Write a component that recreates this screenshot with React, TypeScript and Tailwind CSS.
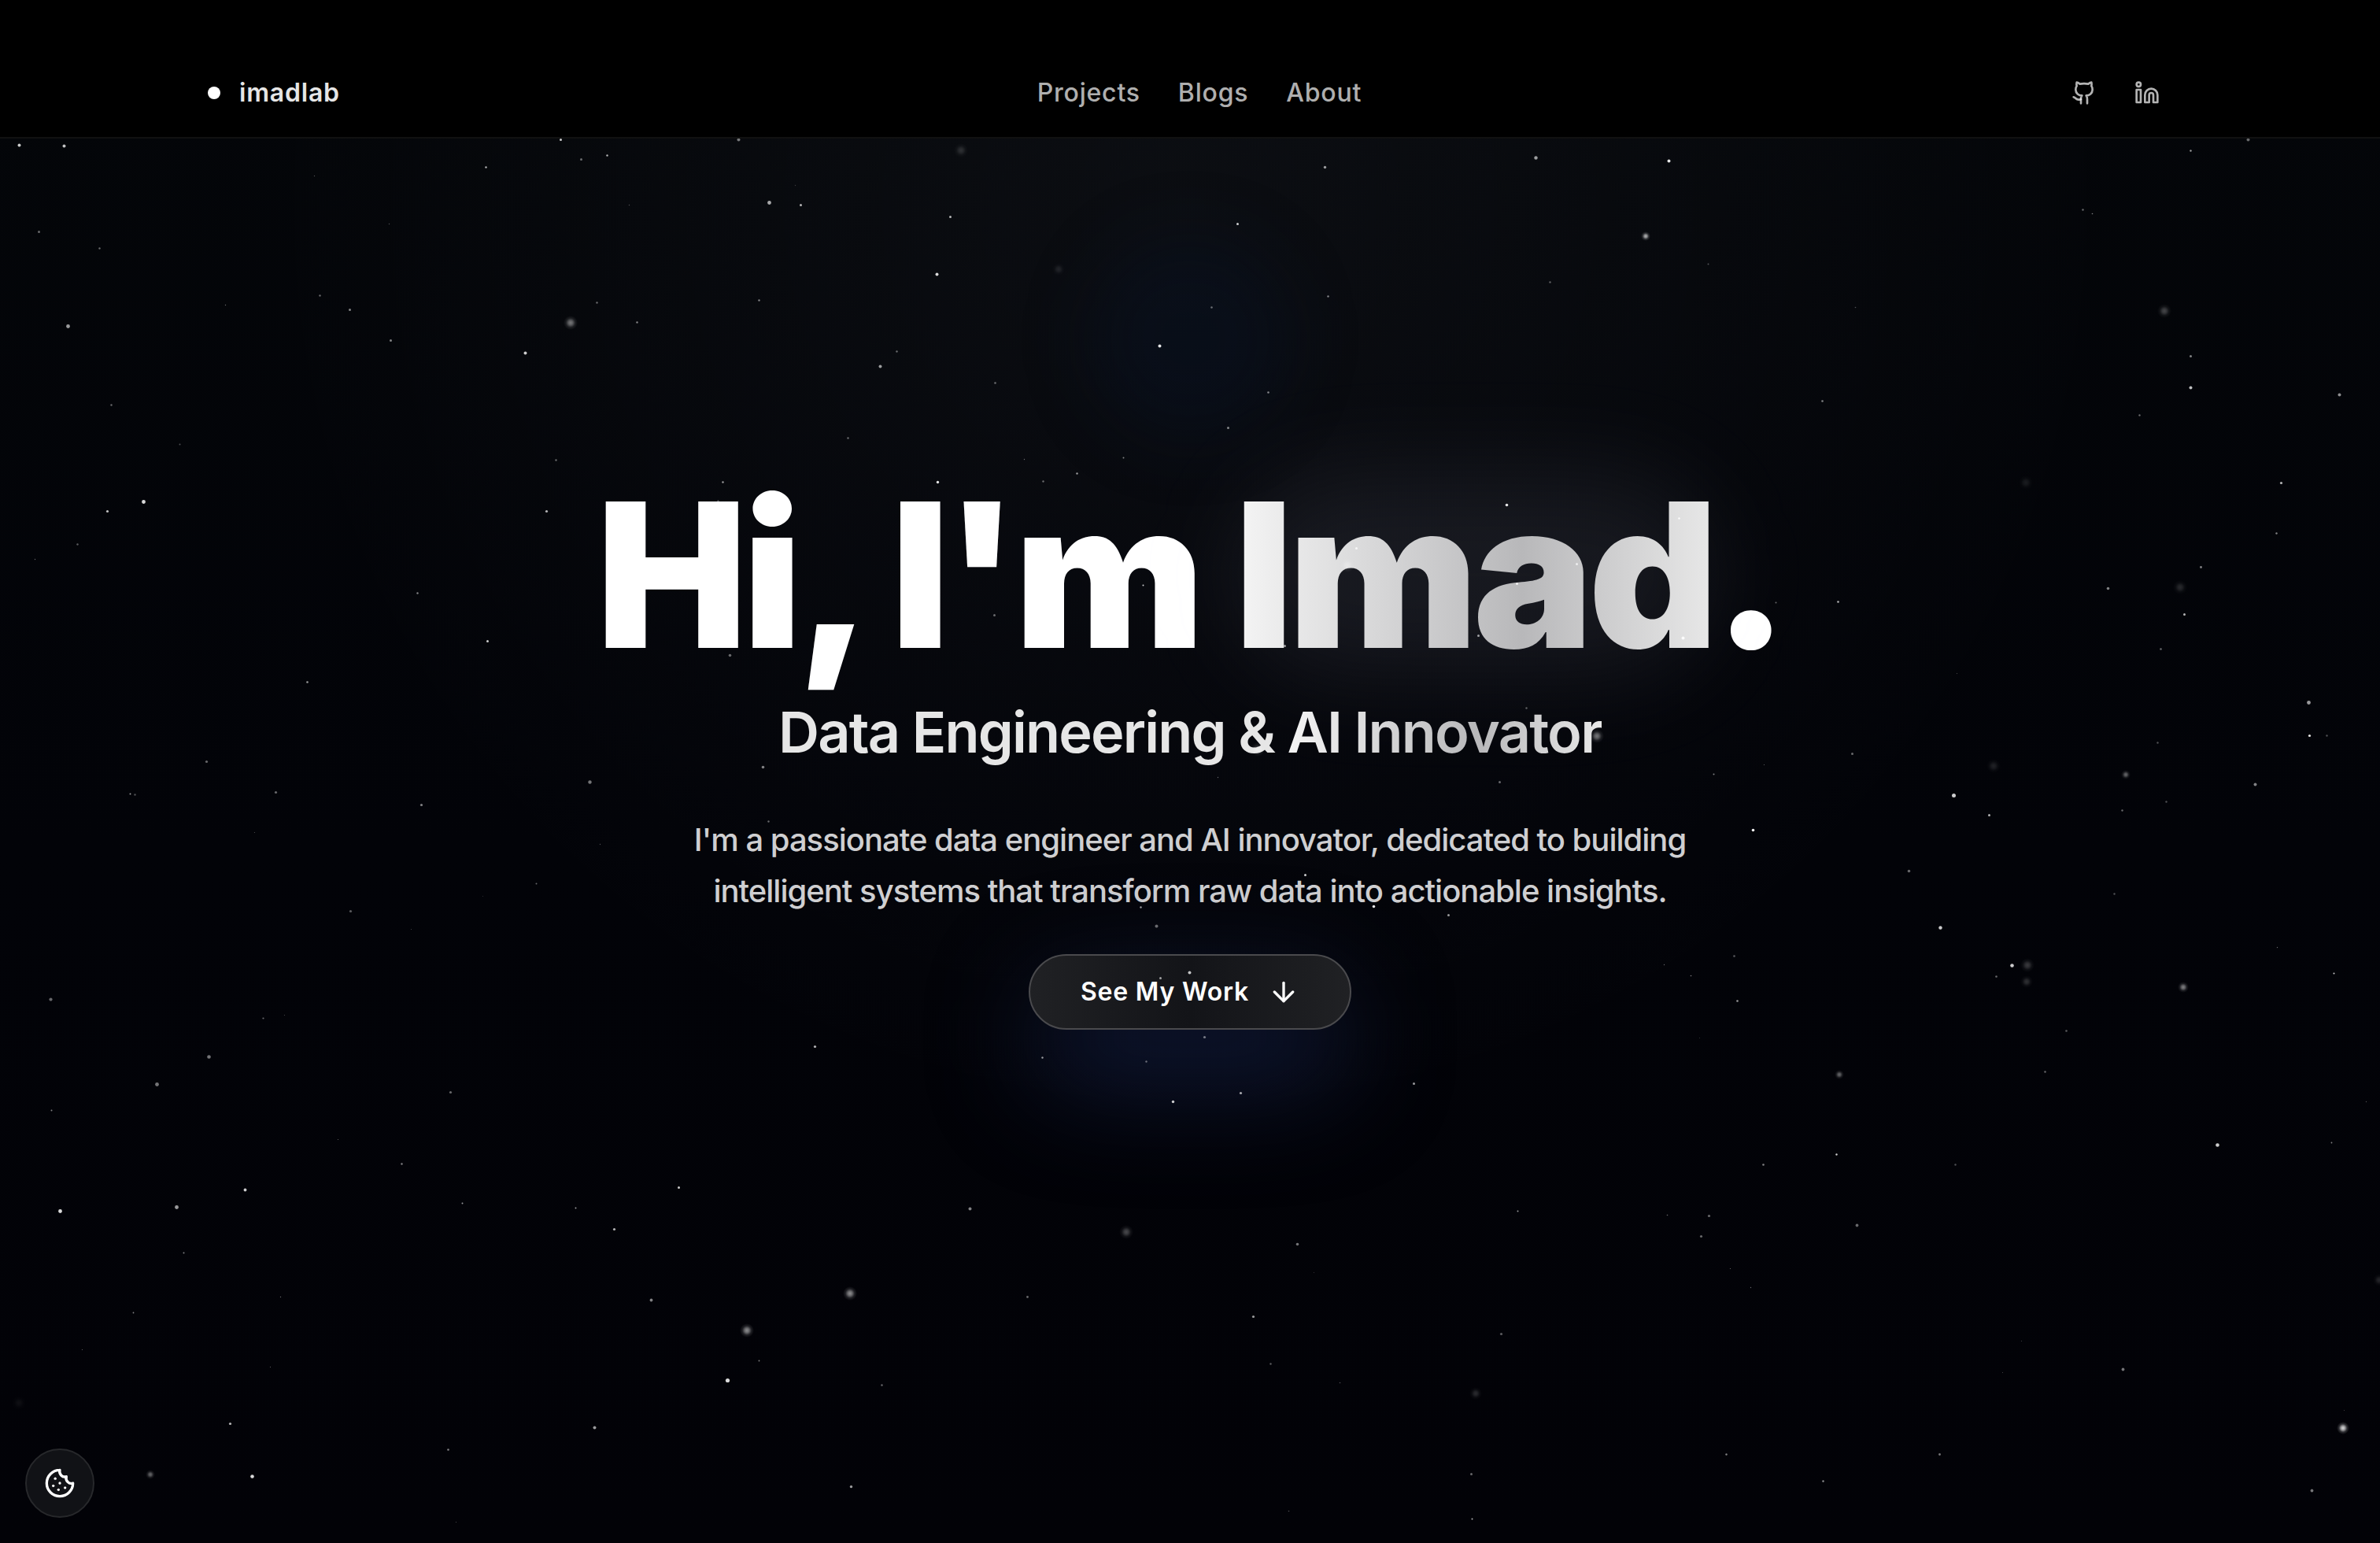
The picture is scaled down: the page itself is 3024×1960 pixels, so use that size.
import { ArrowDown, Cookie, Github, Linkedin } from "lucide-react";

// x, y, radius, opacity
type Star = [number, number, number, number];

const stars: Star[] = [
  [24, 184, 2, 0.8], [81, 185, 2, 0.75], [712, 177, 1.5, 0.8], [938, 177, 2, 0.45], [738, 202, 1.5, 0.4],
  [771, 197, 1.2, 0.7], [617, 212, 1.2, 0.7], [399, 223, 0.7, 0.3], [977, 257, 2.4, 0.65], [799, 260, 0.7, 0.3],
  [49, 294, 1.5, 0.4], [126, 315, 1.2, 0.4], [494, 284, 0.7, 0.3], [286, 387, 0.7, 0.4], [406, 375, 1.2, 0.4],
  [444, 393, 1.5, 0.5], [86, 414, 2.4, 0.6], [496, 432, 1.5, 0.5], [758, 384, 1.2, 0.4], [809, 409, 1.2, 0.5],
  [964, 381, 1.2, 0.5], [667, 448, 2, 0.8], [141, 514, 1.2, 0.4], [228, 564, 1, 0.3], [706, 584, 1.2, 0.4],
  [918, 612, 1.2, 0.6], [182, 637, 2.4, 0.85], [136, 649, 1.6, 0.75], [694, 649, 1.6, 0.7], [912, 636, 1.2, 0.3],
  [98, 691, 1.2, 0.35], [44, 710, 0.7, 0.4], [530, 753, 1.2, 0.5], [1017, 260, 1.5, 0.7], [1010, 235, 0.7, 0.2],
  [1207, 275, 1.5, 0.7], [1190, 348, 2, 0.85], [1118, 465, 2, 0.6], [1139, 446, 1.2, 0.4], [1264, 486, 1.3, 0.4],
  [1473, 439, 2, 0.9], [1539, 390, 1.3, 0.4], [1572, 284, 1.5, 0.8], [1683, 212, 1.7, 0.6], [1687, 376, 1.2, 0.5],
  [1611, 498, 1.3, 0.5], [1560, 543, 1.5, 0.5], [1951, 200, 2.2, 0.6], [1969, 358, 1.2, 0.35], [2120, 204, 2, 0.9],
  [1077, 556, 1.2, 0.4], [1191, 612, 1.7, 0.9], [1368, 601, 1.2, 0.6], [1325, 611, 1.2, 0.4], [1301, 583, 0.7, 0.4],
  [1427, 581, 1, 0.5], [1452, 743, 1, 0.8], [1263, 781, 1.5, 0.4], [927, 832, 1.8, 0.4], [969, 974, 1.8, 0.5],
  [749, 993, 2.2, 0.45], [1914, 641, 1.8, 0.9], [2133, 658, 1.2, 0.9], [1723, 696, 1.5, 0.8], [2003, 716, 1.5, 0.7],
  [1927, 741, 1.5, 0.8], [1878, 807, 1.5, 0.6], [2138, 810, 2, 0.9], [1632, 820, 1.5, 0.6], [2256, 765, 1, 0.4],
  [1939, 899, 1.2, 0.35], [2177, 983, 1, 0.5], [1905, 993, 1.5, 0.4], [2241, 971, 0.6, 0.4], [1547, 987, 0.7, 0.4],
  [976, 1043, 1.2, 0.4], [1658, 1111, 1.5, 0.8], [1449, 1152, 1.2, 0.6], [1745, 1151, 1.8, 0.9], [1840, 1162, 1.5, 0.6],
  [1469, 1176, 2, 0.4], [1511, 1235, 2, 0.75], [1474, 1242, 1.5, 0.6], [1530, 1317, 1.6, 0.45], [1324, 1343, 1.2, 0.6],
  [1456, 1348, 1.2, 0.4], [1490, 1399, 1.7, 0.8], [1576, 1388, 1.6, 0.65], [2856, 177, 2, 0.4], [2783, 191, 1.2, 0.6],
  [2170, 335, 1, 0.3], [2646, 266, 1.2, 0.4], [2658, 271, 0.8, 0.5], [2357, 390, 0.8, 0.3], [2783, 452, 1.5, 0.5],
  [2783, 492, 2, 0.75], [2972, 501, 2, 0.55], [2315, 509, 1.3, 0.5], [2718, 527, 1.2, 0.4], [2898, 613, 1.6, 0.7],
  [2892, 677, 1.2, 0.5], [2796, 720, 1.4, 0.5], [2678, 747, 1.8, 0.5], [2335, 764, 1.3, 0.7], [2775, 780, 1.5, 0.7],
  [2745, 824, 1.3, 0.4], [2486, 855, 0.6, 0.3], [2933, 892, 2.4, 0.6], [2934, 934, 1.6, 0.9], [2956, 934, 1.2, 0.3],
  [2741, 943, 1.2, 0.3], [2353, 957, 1.5, 0.4], [2865, 996, 2, 0.5], [2482, 1010, 2.5, 0.8], [2527, 1035, 1.5, 0.7],
  [2752, 1018, 1.2, 0.3], [2696, 1029, 1.2, 0.4], [2227, 1054, 1.8, 0.95], [2425, 1106, 1.8, 0.4], [2686, 1135, 1.2, 0.3],
  [2465, 1178, 2.2, 0.8], [2203, 1214, 1.3, 0.35], [2114, 1225, 0.7, 0.4], [2148, 1239, 0.8, 0.5], [2556, 1226, 2.3, 0.8],
  [2536, 1240, 1.3, 0.4], [2893, 1203, 0.7, 0.4], [2965, 1236, 1, 0.8], [2207, 1271, 1.3, 0.6], [2159, 1318, 0.6, 0.2],
  [2625, 1309, 1.3, 0.35], [2598, 1361, 1.2, 0.4], [3006, 1399, 0.7, 0.3], [2817, 1454, 2.3, 0.8], [2962, 1451, 0.9, 0.5],
  [2333, 1466, 1.2, 0.8], [2240, 1479, 1.3, 0.5], [2484, 1479, 1.2, 0.3], [1928, 1538, 1, 0.6], [2118, 1543, 0.8, 0.4],
  [2171, 1544, 1.6, 0.4], [2161, 1570, 1.6, 0.4], [2359, 1556, 1.9, 0.4], [2198, 1611, 0.6, 0.4], [2224, 1635, 0.7, 0.4],
  [1907, 1694, 1.6, 0.35], [2697, 1739, 1.9, 0.45], [2568, 1703, 0.5, 0.3], [2544, 1743, 0.5, 0.3], [2978, 1791, 0.5, 0.3],
  [2193, 1847, 1.2, 0.5], [2464, 1847, 1.4, 0.45], [2316, 1881, 1.2, 0.55], [1869, 1872, 1.5, 0.4], [2937, 1893, 1.9, 0.45],
  [1870, 1929, 1, 0.7], [619, 814, 1.5, 0.8], [390, 866, 1.3, 0.6], [262, 967, 1.6, 0.4], [165, 1008, 1, 0.6],
  [171, 1009, 1.2, 0.3], [350, 1006, 1.6, 0.4], [535, 1022, 1.6, 0.5], [323, 1057, 0.6, 0.3], [762, 1072, 0.7, 0.3],
  [681, 1122, 1, 0.4], [613, 1138, 0.5, 0.2], [445, 1157, 1.6, 0.35], [522, 1180, 0.5, 0.3], [64, 1269, 2.1, 0.4],
  [334, 1293, 1.1, 0.4], [361, 1289, 0.6, 0.3], [265, 1342, 2.3, 0.45], [199, 1377, 2.4, 0.45], [572, 1387, 1.6, 0.4],
  [1035, 1329, 1.6, 0.7], [65, 1410, 1, 0.5], [429, 1447, 0.6, 0.4], [510, 1478, 1.2, 0.5], [311, 1511, 1.9, 0.8],
  [862, 1508, 1.5, 0.8], [76, 1538, 2.4, 0.85], [224, 1533, 2.4, 0.6], [587, 1528, 1, 0.6], [731, 1534, 1, 0.6],
  [780, 1561, 1.6, 0.7], [233, 1591, 1, 0.5], [356, 1647, 0.7, 0.4], [827, 1651, 1.9, 0.5], [169, 1667, 0.9, 0.5],
  [104, 1714, 0.6, 0.4], [343, 1736, 0.6, 0.4], [964, 1728, 0.9, 0.5], [924, 1753, 2.6, 0.85], [1120, 1759, 1.2, 0.4],
  [292, 1808, 1.6, 0.7], [755, 1813, 2, 0.6], [569, 1841, 1.3, 0.5], [320, 1875, 2.3, 0.85], [1081, 1888, 1.7, 0.6],
  [579, 1933, 0.6, 0.3], [1796, 1376, 1.5, 0.6], [1232, 1535, 2, 0.5], [1305, 1647, 1.4, 0.4], [1648, 1580, 1.8, 0.45],
  [1592, 1672, 1.6, 0.6], [1614, 1732, 1.2, 0.35], [1702, 1756, 0.8, 0.3], [1637, 1919, 0.8, 0.3], [1669, 1616, 0.6, 0.2],
];

// Out-of-focus stars, drawn through a radial fade
const softStars: Star[] = [
  [725, 410, 9, 0.45], [1221, 191, 9, 0.15], [1345, 342, 8, 0.1], [2091, 300, 6, 0.7], [2750, 395, 9, 0.26],
  [2574, 613, 9, 0.09], [2770, 746, 9, 0.15], [2029, 935, 9, 0.45], [1712, 718, 9, 0.3], [1598, 952, 9, 0.3],
  [2533, 973, 9, 0.12], [2701, 984, 6, 0.4], [2576, 1226, 9, 0.22], [2575, 1247, 8, 0.18], [2774, 1254, 7, 0.5],
  [2337, 1365, 6, 0.4], [1875, 1770, 8, 0.16], [2977, 1814, 8, 0.85], [3023, 1626, 8, 0.14], [1080, 1643, 9, 0.55],
  [949, 1690, 9, 0.55], [24, 1782, 9, 0.05], [191, 1873, 6, 0.4], [1431, 1565, 9, 0.28],
];

function StarField() {
  return (
    <svg
      aria-hidden="true"
      className="pointer-events-none absolute inset-0 z-10 h-full w-full"
      viewBox="0 0 3024 1960"
      preserveAspectRatio="xMidYMid slice"
    >
      <defs>
        <radialGradient id="star-fade">
          <stop offset="0" stopColor="#fff" />
          <stop offset="0.3" stopColor="#fff" stopOpacity="0.75" />
          <stop offset="0.65" stopColor="#fff" stopOpacity="0.2" />
          <stop offset="1" stopColor="#fff" stopOpacity="0" />
        </radialGradient>
      </defs>
      {stars.map(([x, y, r, o]) => (
        <circle key={`${x}-${y}`} cx={x + 0.5} cy={y + 0.5} r={r} fill="#fff" fillOpacity={o} />
      ))}
      {softStars.map(([x, y, r, o]) => (
        <circle key={`${x}-${y}`} cx={x} cy={y} r={r} fill="url(#star-fade)" opacity={o} />
      ))}
    </svg>
  );
}

const links = ["Projects", "Blogs", "About"];

function Header() {
  return (
    <header className="relative z-20 border-b-2 border-[#111111] bg-black pt-[62px]">
      <div className="mx-auto flex h-28 max-w-[2560px] items-center justify-between px-8">
        <a href="#home" className="flex items-center gap-6 text-[32px] leading-[50px] font-semibold tracking-wide text-white/90">
          <span className="size-4 rounded-full bg-white" />
          imadlab
        </a>
        <nav className="flex gap-12">
          {links.map((label) => (
            <a key={label} href={`#${label.toLowerCase()}`} className="text-[32px] leading-[50px] font-medium tracking-wide text-white/70">
              {label}
            </a>
          ))}
        </nav>
        <div className="flex gap-4">
          <a href="#github" aria-label="GitHub" className="p-4 text-white/70">
            <Github size={32} />
          </a>
          <a href="#linkedin" aria-label="LinkedIn" className="p-4 text-white/70">
            <Linkedin size={32} />
          </a>
        </div>
      </div>
    </header>
  );
}

const silver = "bg-[linear-gradient(90deg,#f5f5f5_0%,#b8b8ba_60%,#e8e8e8_100%)] bg-clip-text text-transparent";

function Hero() {
  return (
    <main className="relative flex flex-1 flex-col items-center justify-center pb-[226px] text-center">
      <h1 className="text-[256px] leading-[256px] font-black tracking-tight whitespace-nowrap text-white">
        Hi, I'm{" "}
        <span className="relative inline-block">
          <span className="absolute inset-0 rounded-full bg-[#dcdcff]/8 blur-[64px]" />
          <span className={`relative ${silver}`}>Imad</span>
        </span>
        .
      </h1>
      <p className="relative mt-8 text-[72px] leading-[80px] font-semibold tracking-tight text-[#e6e6e6]">
        Data Engineering &amp; <span className={silver}>AI Innovator</span>
      </p>
      <p className="relative mt-16 max-w-[1344px] text-[40px] leading-[65px] font-medium tracking-tight text-[#cfcfd1]">
        I'm a passionate data engineer and AI innovator, dedicated to building intelligent systems that transform raw
        data into actionable insights.
      </p>
      <div className="relative mt-12">
        <div className="absolute inset-x-0 -bottom-20 h-36 rounded-full bg-[#142046]/60 blur-[64px]" />
        <button className="relative flex h-24 items-center gap-6 rounded-full border-2 border-[#4a4a4d] bg-[linear-gradient(90deg,#202124,#131418,#202124)] px-16 text-[32px] leading-[50px] font-semibold tracking-wide text-white">
          See My Work
          <ArrowDown size={40} />
        </button>
      </div>
    </main>
  );
}

export default function App() {
  return (
    <div className="relative flex min-h-screen flex-col overflow-hidden bg-[linear-gradient(180deg,#040609_0%,#020308_55%,#020207_100%)] font-['Inter',sans-serif]">
      <div className="absolute inset-0 bg-[radial-gradient(1200px_1200px_at_50%_260px,rgba(210,220,255,0.04),transparent)]" />
      <div className="absolute top-[300px] left-1/2 size-[260px] -translate-x-1/2 rounded-full bg-[#08142c]/30 blur-[40px]" />
      <Header />
      <Hero />
      <StarField />
      <button
        aria-label="Cookie preferences"
        className="absolute bottom-8 left-8 z-20 flex size-[88px] items-center justify-center rounded-full border-2 border-[#27282b] bg-[#111216] text-white"
      >
        <Cookie size={40} />
      </button>
    </div>
  );
}
